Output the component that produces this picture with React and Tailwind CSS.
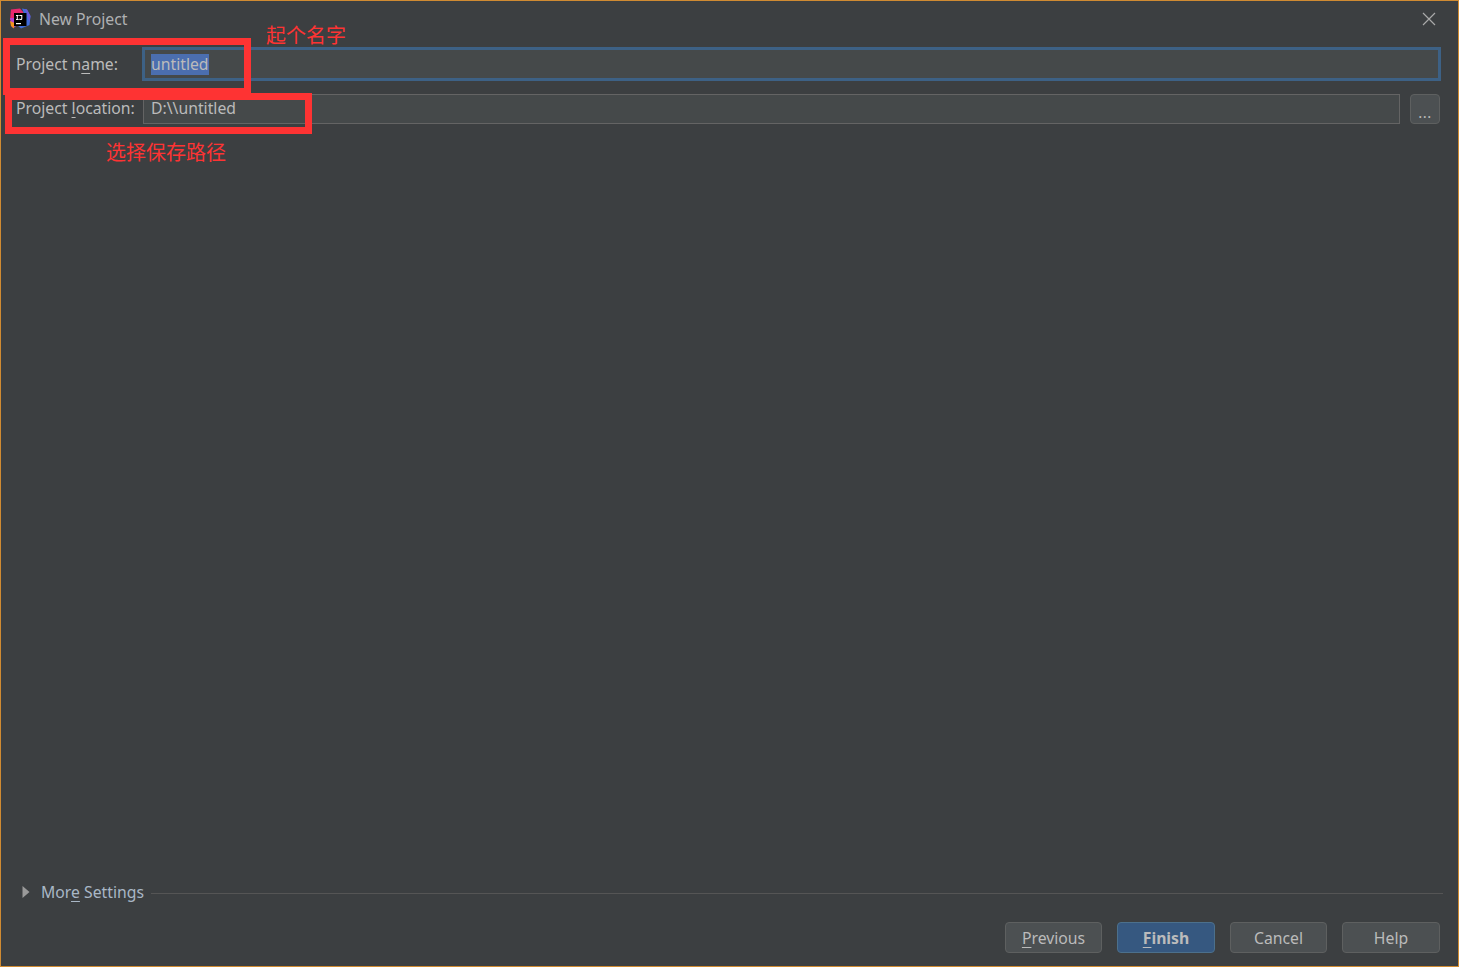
import React from "react";

const Mn = ({ children }) => <span className="underline underline-offset-[3px] decoration-1">{children}</span>;

const AppLogo = () => (
  <svg width="22" height="22" viewBox="0 0 22 22" className="shrink-0">
    <path d="M2 1.500 L11 0.500 L15 5 L6 13 L1 12 Z" fill="#e8286e" />
    <path d="M1 10 L7 10 L6.500 19 L3 19.500 Z" fill="#b13fd0" />
    <path d="M1 13 L5.500 15 L5 20.500 L2 18 Z" fill="#f7941d" />
    <path d="M13 0.500 L18 1.500 L21.500 8 L20.500 17 L12 20.500 L8 17 L16 8 Z" fill="#3f6ddb" />
    <path d="M16 1 L18 1.500 L21.500 8 L20.500 14 Z" fill="#6b57d6" />
    <rect x="5" y="5" width="12.500" height="13" fill="#000000" />
    <path d="M7 7h2.600v.9h-.8v3.200h.8v.9H7v-.9h.8V7.900H7z" fill="#ffffff" />
    <path d="M10.300 7h3v3.400c0 1.100-.7 1.700-1.600 1.700-.8 0-1.300-.4-1.600-.9l.7-.6c.2.300.5.500.8.500.4 0 .7-.2.700-.8V7.900h-2z" fill="#ffffff" />
    <rect x="7" y="15" width="5" height="1.200" fill="#ffffff" />
  </svg>
);

const Footer = ({ children, primary, width }) => (
  <button
    className={`h-[31px] rounded-[4px] border text-[15.75px] pt-[2px] flex items-center justify-center ${width} ${
      primary
        ? "bg-[#365880] border-[#4c708c] text-[#bbbbbb] font-bold"
        : "bg-[#4c5052] border-[#5e6060] text-[#bbbbbb]"
    }`}
  >
    <span>{children}</span>
  </button>
);

export default function App() {
  return (
    <div className="relative w-[1459px] h-[967px] overflow-hidden flex flex-col bg-[#3c3f41] border border-[#d08b32] text-[#bbbbbb] text-[15.75px] font-['Noto_Sans','Open_Sans',sans-serif]">
      {/* title */}
      <div className="h-[36px] shrink-0 flex items-center pl-[8px] pr-[21px]">
        <AppLogo />
        <span className="ml-[8px] pt-[2px] text-[#afb1b3]">New Project</span>
        <svg width="16" height="16" viewBox="0 0 16 16" className="ml-auto" stroke="#a9a9a9" strokeWidth="1.200" fill="none">
          <path d="M2 2 L14 14 M14 2 L2 14" />
        </svg>
      </div>

      {/* form */}
      <div className="flex flex-col pl-[15px] pr-[17px] pt-[10px]">
        <div className="h-[34px] flex items-center">
          <span className="w-[126px] pt-[2px] shrink-0 whitespace-nowrap">Project n<Mn>a</Mn>me:</span>
          <div className="flex-1 h-[34px] flex items-center pl-[6px] border-[3px] border-[#3d6185] bg-[#45494a]">
            <span className="bg-[#4b6eaf] text-[#bbbbbb] leading-[21px] h-[21px]">untitled</span>
          </div>
        </div>
        <div className="h-[30px] mt-[13px] pr-[1px] flex items-center">
          <span className="w-[127px] shrink-0 whitespace-nowrap">Project <Mn>l</Mn>ocation:</span>
          <div className="flex-1 h-[30px] flex items-center pl-[7px] border border-[#646464] bg-[#45494a]">
            D:\\untitled
          </div>
          <button className="ml-[10px] w-[30px] h-[30px] rounded-[4px] border border-[#5e6060] bg-[#4c5052] text-[15px] leading-none pt-[6px] tracking-[0.5px] text-[#bbbbbb]">
            ...
          </button>
        </div>
      </div>

      <div className="flex-1" />

      {/* more settings */}
      <div className="flex items-center pl-[21px] pr-[15px] h-[20px]">
        <svg width="8" height="12" viewBox="0 0 8 12" className="shrink-0 -mt-[3px]">
          <path d="M0.500 0 L7.500 6 L0.500 12 Z" fill="#9a9a9a" />
        </svg>
        <span className="ml-[11px] text-[#a9b7c6] whitespace-nowrap">Mor<Mn>e</Mn> Settings</span>
        <div className="flex-1 h-px bg-[#555555] ml-[7px]" />
      </div>

      {/* buttons */}
      <div className="flex justify-end pr-[18px] pt-[19px] pb-[13px]">
        <Footer width="w-[97px]"><Mn>P</Mn>revious</Footer>
        <div className="ml-[15px]"><Footer primary width="w-[98px]"><Mn>F</Mn>inish</Footer></div>
        <div className="ml-[15px]"><Footer width="w-[97px]">Cancel</Footer></div>
        <div className="ml-[15px]"><Footer width="w-[98px]">Help</Footer></div>
      </div>

      {/* red annotations drawn over the screenshot */}
      <div className="absolute left-[2px] top-[37px] w-[248px] h-[57px] border-[7px] border-[#fe3333]" />
      <div className="absolute left-[4px] top-[92px] w-[307px] h-[41px] border-[7px] border-[#fe3333]" />
      <div className="absolute left-[265px] top-[20px] text-[20px] leading-[27px] text-[#fe3333] font-['Noto_Sans_CJK_SC',sans-serif]">起个名字</div>
      <div className="absolute left-[105px] top-[137px] text-[20px] leading-[27px] text-[#fe3333] font-['Noto_Sans_CJK_SC',sans-serif]">选择保存路径</div>
    </div>
  );
}
